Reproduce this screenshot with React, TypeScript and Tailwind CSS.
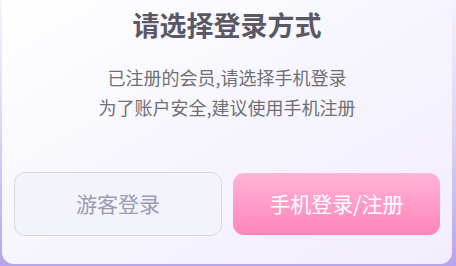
export default function App() {
  return (
    <div
      className="h-[266px] w-[456px] overflow-hidden bg-gradient-to-b from-[#f6f2fd] via-[#ddd2f8] to-[#b8a4ee]"
      style={{ fontFamily: '"Noto Sans CJK SC", "Noto Sans", sans-serif' }}
    >
      <div className="ml-[2px] flex h-[264px] w-[450px] flex-col items-center rounded-b-[12px] bg-gradient-to-br from-[#ffffff] via-[#f6f5fd] to-[#f2edfc]">
        <h1 className="mt-[6px] text-[27px] font-bold leading-[38px] text-[#5a5866]">请选择登录方式</h1>
        <div className="mt-[18px] flex flex-col items-center text-[18px] leading-[30px] text-[#707074]">
          <p>已注册的会员,请选择手机登录</p>
          <p>为了账户安全,建议使用手机注册</p>
        </div>
        <div className="mt-[50px] flex w-full items-center gap-[11px] px-[12px]">
          <button className="flex h-[64px] w-[208px] items-center justify-center rounded-[11px] border-[1.5px] border-[#d6d8dc] bg-[#f3f3fc] text-[21px] text-[#9a9cb2]">
            游客登录
          </button>
          <button className="flex h-[62px] w-[207px] items-center justify-center rounded-[11px] bg-gradient-to-b from-[#ffb4d6] to-[#ff84ba] text-[21px] text-white">
            手机登录/注册
          </button>
        </div>
      </div>
    </div>
  );
}
